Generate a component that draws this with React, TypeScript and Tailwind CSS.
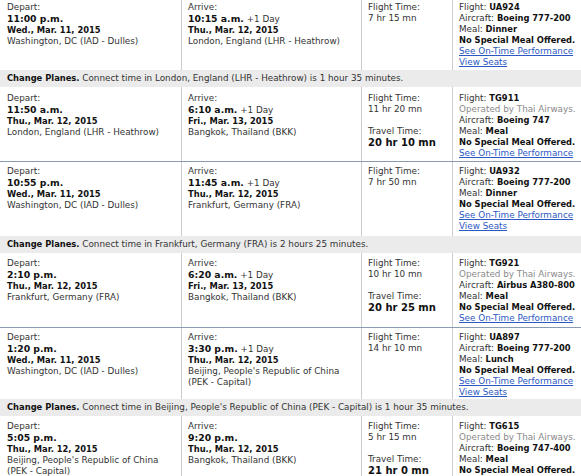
import React from 'react';

type Leg = {
  depTime: string;
  depDate: string;
  depCity: string;
  arrTime: string;
  plusDay?: boolean;
  arrDate: string;
  arrCity: string;
  flightTime: string;
  travelTime?: string;
  flight: string;
  operatedBy?: string;
  aircraft: string;
  meal: string;
  viewSeats?: boolean;
};

type Item =
  | { kind: 'leg'; leg: Leg; divider?: boolean; pad: string }
  | { kind: 'connect'; text: string };

const items: Item[] = [
  {
    kind: 'leg',
    pad: 'pt-[2px] pb-[2px]',
    leg: {
      depTime: '11:00 p.m.',
      depDate: 'Wed., Mar. 11, 2015',
      depCity: 'Washington, DC (IAD - Dulles)',
      arrTime: '10:15 a.m.',
      plusDay: true,
      arrDate: 'Thu., Mar. 12, 2015',
      arrCity: 'London, England (LHR - Heathrow)',
      flightTime: '7 hr 15 mn',
      flight: 'UA924',
      aircraft: 'Boeing 777-200',
      meal: 'Dinner',
      viewSeats: true,
    },
  },
  { kind: 'connect', text: 'Connect time in London, England (LHR - Heathrow) is 1 hour 35 minutes.' },
  {
    kind: 'leg',
    divider: true,
    pad: 'pt-[6px] pb-[2px]',
    leg: {
      depTime: '11:50 a.m.',
      depDate: 'Thu., Mar. 12, 2015',
      depCity: 'London, England (LHR - Heathrow)',
      arrTime: '6:10 a.m.',
      plusDay: true,
      arrDate: 'Fri., Mar. 13, 2015',
      arrCity: 'Bangkok, Thailand (BKK)',
      flightTime: '11 hr 20 mn',
      travelTime: '20 hr 10 mn',
      flight: 'TG911',
      operatedBy: 'Operated by Thai Airways.',
      aircraft: 'Boeing 747',
      meal: 'Meal',
    },
  },
  {
    kind: 'leg',
    pad: 'pt-[4px] pb-[4px]',
    leg: {
      depTime: '10:55 p.m.',
      depDate: 'Wed., Mar. 11, 2015',
      depCity: 'Washington, DC (IAD - Dulles)',
      arrTime: '11:45 a.m.',
      plusDay: true,
      arrDate: 'Thu., Mar. 12, 2015',
      arrCity: 'Frankfurt, Germany (FRA)',
      flightTime: '7 hr 50 mn',
      flight: 'UA932',
      aircraft: 'Boeing 777-200',
      meal: 'Dinner',
      viewSeats: true,
    },
  },
  { kind: 'connect', text: 'Connect time in Frankfurt, Germany (FRA) is 2 hours 25 minutes.' },
  {
    kind: 'leg',
    divider: true,
    pad: 'pt-[5px] pb-[3px]',
    leg: {
      depTime: '2:10 p.m.',
      depDate: 'Thu., Mar. 12, 2015',
      depCity: 'Frankfurt, Germany (FRA)',
      arrTime: '6:20 a.m.',
      plusDay: true,
      arrDate: 'Fri., Mar. 13, 2015',
      arrCity: 'Bangkok, Thailand (BKK)',
      flightTime: '10 hr 10 mn',
      travelTime: '20 hr 25 mn',
      flight: 'TG921',
      operatedBy: 'Operated by Thai Airways.',
      aircraft: 'Airbus A380-800',
      meal: 'Meal',
    },
  },
  {
    kind: 'leg',
    pad: 'pt-[4px] pb-[1px]',
    leg: {
      depTime: '1:20 p.m.',
      depDate: 'Wed., Mar. 11, 2015',
      depCity: 'Washington, DC (IAD - Dulles)',
      arrTime: '3:30 p.m.',
      plusDay: true,
      arrDate: 'Thu., Mar. 12, 2015',
      arrCity: "Beijing, People's Republic of China (PEK - Capital)",
      flightTime: '14 hr 10 mn',
      flight: 'UA897',
      aircraft: 'Boeing 777-200',
      meal: 'Lunch',
      viewSeats: true,
    },
  },
  { kind: 'connect', text: "Connect time in Beijing, People's Republic of China (PEK - Capital) is 1 hour 35 minutes." },
  {
    kind: 'leg',
    pad: 'pt-[5px] pb-[3px]',
    leg: {
      depTime: '5:05 p.m.',
      depDate: 'Thu., Mar. 12, 2015',
      depCity: "Beijing, People's Republic of China (PEK - Capital)",
      arrTime: '9:20 p.m.',
      arrDate: 'Thu., Mar. 12, 2015',
      arrCity: 'Bangkok, Thailand (BKK)',
      flightTime: '5 hr 15 mn',
      travelTime: '21 hr 0 mn',
      flight: 'TG615',
      operatedBy: 'Operated by Thai Airways.',
      aircraft: 'Boeing 747-400',
      meal: 'Meal',
    },
  },
];

const LegRow = ({ leg, divider, pad }: { leg: Leg; divider?: boolean; pad: string }) => (
  <div
    className={`grid grid-cols-[182px_180px_91px_1fr] ${divider ? 'border-b border-[#8a9ab2]' : ''}`}
  >
    {/* Depart */}
    <div className={`border-r border-[#cccccc] pl-[7px] pr-[4px] ${pad}`}>
      <div>Depart:</div>
      <div className="text-[9.3px] leading-[12px] font-bold text-[#111]">{leg.depTime}</div>
      <div className="text-[8.35px] font-bold text-[#111]">{leg.depDate}</div>
      <div>{leg.depCity}</div>
    </div>

    {/* Arrive */}
    <div className={`border-r border-[#cccccc] pl-[6px] pr-[4px] ${pad}`}>
      <div>Arrive:</div>
      <div className="leading-[12px]">
        <span className="text-[9.3px] font-bold text-[#111]">{leg.arrTime}</span>
        {leg.plusDay && <span> +1 Day</span>}
      </div>
      <div className="text-[8.35px] font-bold text-[#111]">{leg.arrDate}</div>
      <div>{leg.arrCity}</div>
    </div>

    {/* Flight / travel time */}
    <div className={`border-r border-[#cccccc] pl-[6px] ${pad}`}>
      <div>Flight Time:</div>
      <div>{leg.flightTime}</div>
      {leg.travelTime && (
        <>
          <div className="mt-[11px]">Travel Time:</div>
          <div className="text-[10px] leading-[12px] font-bold text-[#111]">{leg.travelTime}</div>
        </>
      )}
    </div>

    {/* Flight details */}
    <div className={`pl-[6px] whitespace-nowrap ${pad}`}>
      <div>
        Flight: <span className="text-[8.35px] font-bold text-[#111]">{leg.flight}</span>
      </div>
      {leg.operatedBy && <div className="text-[#8a8a8a]">{leg.operatedBy}</div>}
      <div>
        Aircraft: <span className="text-[8.35px] font-bold text-[#111]">{leg.aircraft}</span>
      </div>
      <div>
        Meal: <span className="text-[8.35px] font-bold text-[#111]">{leg.meal}</span>
      </div>
      <div className="text-[8.35px] font-bold text-[#111]">No Special Meal Offered.</div>
      <div>
        <a href="#" className="text-[#2b58c2] underline">See On-Time Performance</a>
      </div>
      {leg.viewSeats && (
        <div>
          <a href="#" className="text-[#2b58c2] underline">View Seats</a>
        </div>
      )}
    </div>
  </div>
);

const ConnectBar = ({ text }: { text: string }) => (
  <div className="h-[17px] flex items-center pl-[7px] bg-[#ebebeb] whitespace-nowrap">
    <span className="text-[8.35px] font-bold text-[#111]">Change Planes.</span>
    <span>&nbsp;{text}</span>
  </div>
);

export default function App() {
  return (
    <div
      className="w-[581px] h-[476px] overflow-hidden bg-white text-[8.8px] leading-[11px] text-[#333]"
      style={{ fontFamily: '"DejaVu Sans", Verdana, sans-serif' }}
    >
      {items.map((it, i) =>
        it.kind === 'leg' ? (
          <LegRow key={i} leg={it.leg} divider={it.divider} pad={it.pad} />
        ) : (
          <ConnectBar key={i} text={it.text} />
        )
      )}
    </div>
  );
}
